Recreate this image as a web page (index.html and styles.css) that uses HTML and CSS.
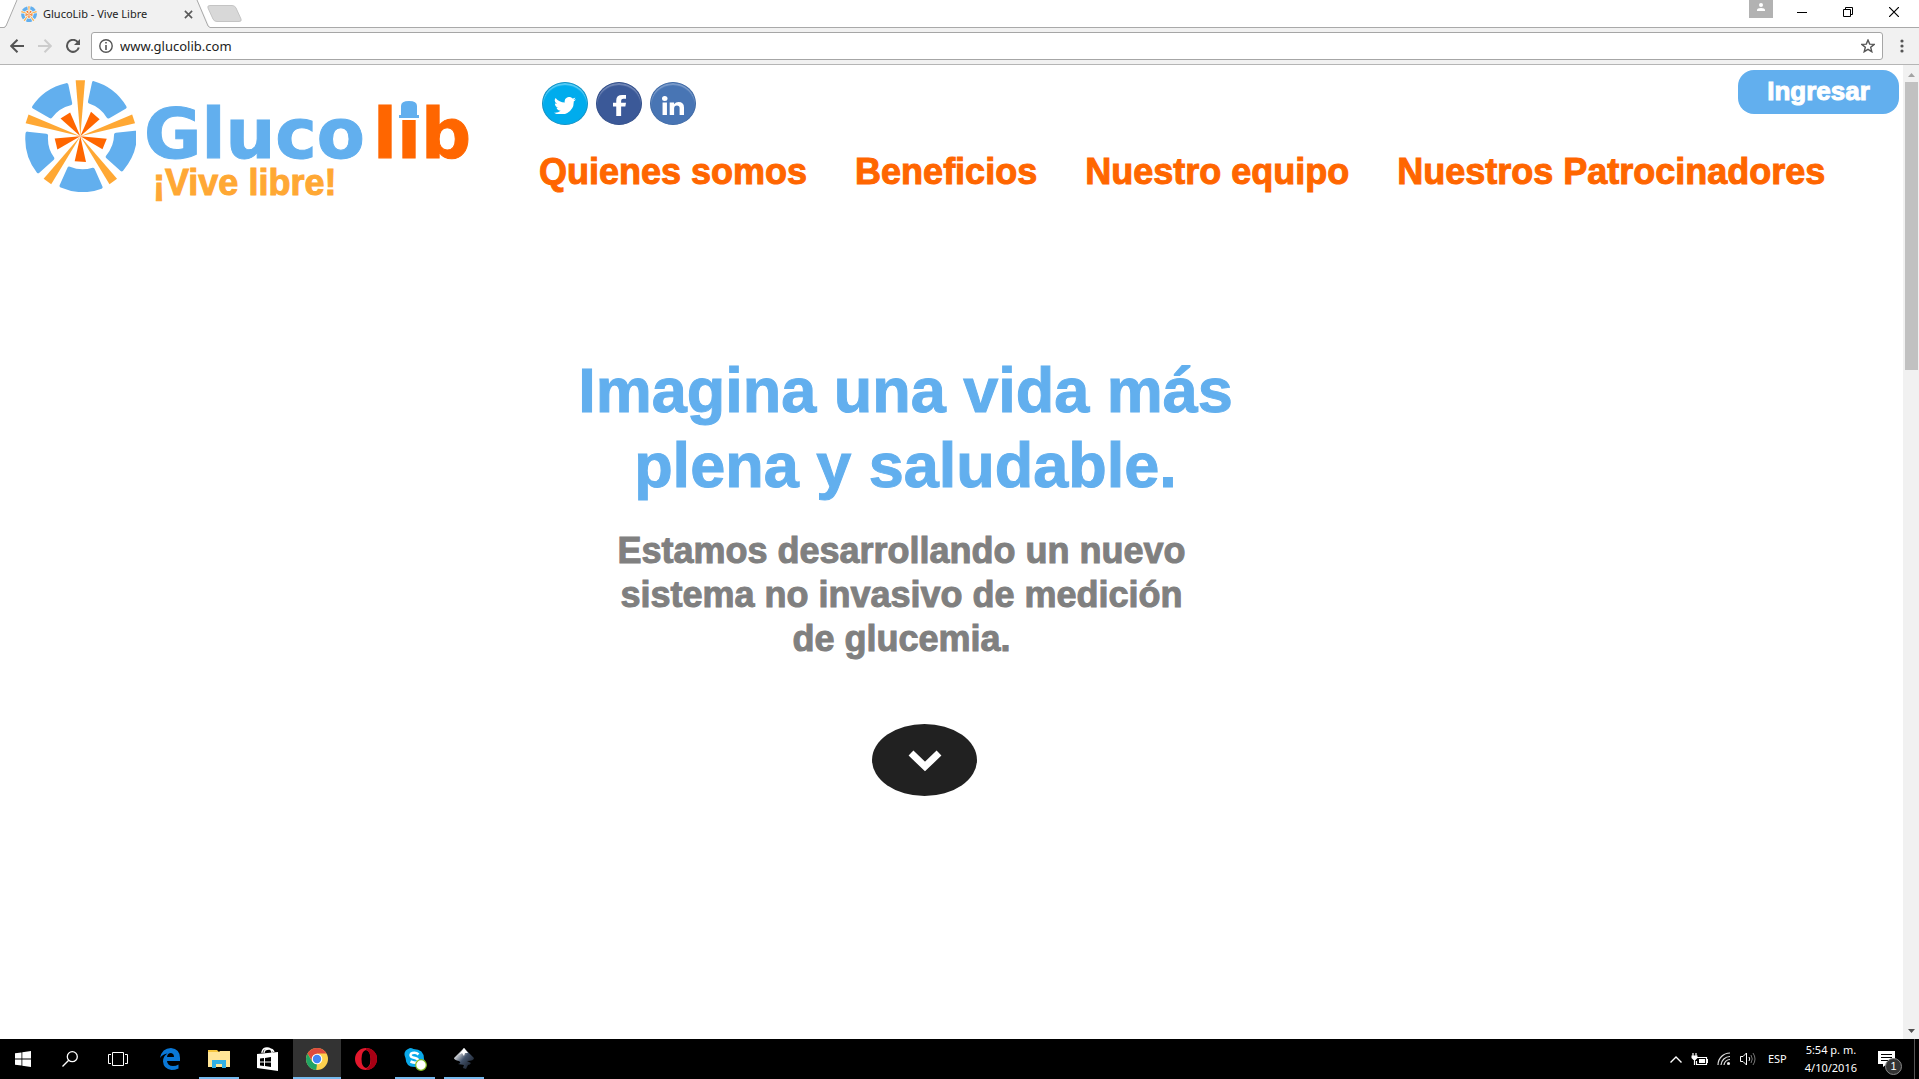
FILE: index.html
```html
<!DOCTYPE html>
<html lang="es">
<head>
<meta charset="utf-8">
<meta name="viewport" content="width=device-width, initial-scale=1">
<title>GlucoLib - Vive Libre</title>
<link rel="stylesheet" href="styles.css">
</head>
<body>
<svg width="0" height="0" class="defs" aria-hidden="true">
  <defs>
    <g id="slice">
      <path fill="#62afee" d="M276 50Q277 45 282 46Q344 63 379 121Q382 126 377 129L328 157Q323 160 320 155Q301 124 267 113Q263 111 264 106Z"/>
      <path fill="#ffa834" d="M227 43H255L241 211Z"/>
      <path fill="#f60" d="M273 138L299 160L241 211Z"/>
    </g>
    <g id="emblem">
      <use href="#slice"/>
      <use href="#slice" transform="rotate(72 241 211)"/>
      <use href="#slice" transform="rotate(144 241 211)"/>
      <use href="#slice" transform="rotate(216 241 211)"/>
      <use href="#slice" transform="rotate(288 241 211)"/>
    </g>
  </defs>
</svg>

<div class="tabstrip">
  <div class="tab">
    <svg class="tab-shape" viewBox="0 0 210 28" aria-hidden="true"><path d="M0 27.500H5L17 1L18 0H197L198 1L210 27.500V28H0Z" fill="#f1f1f1"/><path d="M0 27.500H4L6 26L17 0M197 0L208 26L210 27.500" fill="none" stroke="#a9a9a9"/></svg>
    <svg class="favicon" viewBox="75 40 333 338" aria-hidden="true"><use href="#emblem"/></svg>
    <span class="tab-title">GlucoLib - Vive Libre</span>
    <button class="plain tab-close" aria-label="Cerrar pestaña"><svg width="9" height="9" viewBox="0 0 10 10"><path d="M1 1L9 9M9 1L1 9" stroke="#5a5a5a" stroke-width="1.800"/></svg></button>
  </div>
  <button class="plain new-tab" aria-label="Nueva pestaña"><svg width="36" height="18" viewBox="0 0 36 18"><path d="M3 .5H25Q28 .5 29 3L34 14Q35 16.500 32 16.500H10Q7 16.500 6 14L1 3Q0 .5 3 .5Z" fill="#d8d8d8" stroke="#c4c4c4"/></svg></button>
  <div class="window-buttons">
    <button class="plain profile" aria-label="Perfil"><svg width="24" height="18" viewBox="0 0 24 18"><path fill="#b2b2b2" d="M0 0H24V18H0Z"/><circle cx="12" cy="5" r="2" fill="#fff"/><path d="M8 11V10Q8 8 12 8Q16 8 16 10V11Z" fill="#fff"/></svg></button>
    <button class="plain" aria-label="Minimizar"><svg width="10" height="10" viewBox="0 0 10 10"><path d="M0 5.500H10" stroke="#000"/></svg></button>
    <button class="plain" aria-label="Restaurar"><svg width="10" height="10" viewBox="0 0 10 10"><path d="M.5 2.500H7.500V9.500H.5ZM2.500 2V.5H9.500V7.500H8" fill="none" stroke="#000"/></svg></button>
    <button class="plain" aria-label="Cerrar"><svg width="10" height="10" viewBox="0 0 10 10"><path d="M0 0L10 10M10 0L0 10" stroke="#000" stroke-width="1.200"/></svg></button>
  </div>
</div>

<div class="toolbar">
  <button class="plain" aria-label="Atrás"><svg width="14" height="14" viewBox="0 0 14 14"><path d="M14 7H1M7.500 .7L1.200 7L7.500 13.300" fill="none" stroke="#555" stroke-width="2"/></svg></button>
  <button class="plain" aria-label="Adelante"><svg width="14" height="14" viewBox="0 0 14 14"><path d="M0 7H13M6.500 .7L12.800 7L6.500 13.300" fill="none" stroke="#ccc" stroke-width="2"/></svg></button>
  <button class="plain" aria-label="Recargar"><svg width="14" height="14" viewBox="0 0 14 14"><path d="M11.800 3.200A6 6 0 1 0 12.800 8.500" fill="none" stroke="#555" stroke-width="2"/><path d="M14 0V6H8Z" fill="#555"/></svg></button>
  <div class="omnibox">
    <svg width="14" height="14" viewBox="0 0 14 14" aria-hidden="true"><circle cx="7" cy="7" r="6.200" fill="none" stroke="#555" stroke-width="1.400"/><path d="M7 3V4.600M7 6V11" stroke="#555" stroke-width="1.600"/></svg>
    <input type="text" value="www.glucolib.com" aria-label="Dirección">
    <button class="plain" aria-label="Favorito"><svg width="14" height="14" viewBox="0 0 14 14"><path d="M7 1L8.700 5.100L13.200 5.400L9.700 8.300L10.800 12.700L7 10.300L3.200 12.700L4.300 8.300L.8 5.400L5.300 5.100Z" fill="none" stroke="#555" stroke-width="1.400"/></svg></button>
  </div>
  <button class="plain menu" aria-label="Menú"><svg width="4" height="14" viewBox="0 0 4 14" fill="#555"><circle cx="2" cy="2" r="1.600"/><circle cx="2" cy="7" r="1.600"/><circle cx="2" cy="12" r="1.600"/></svg></button>
</div>

<div class="viewport">
  <div class="page">
    <header class="site-header">
      <a class="logo" href="#">
        <svg class="emblem" viewBox="75 40 333 338" aria-hidden="true"><use href="#emblem"/></svg>
        <span class="brand">
          <span class="wordmark"><span class="gluco">Gluco</span><span class="lib">l<span class="capped">i<svg class="cap" viewBox="0 0 24 19" aria-hidden="true"><path d="M0 0H24V19H0Z" fill="#fff"/><path d="M4 14V5Q4 0 12 0Q20 0 20 5V14H22V17H2V14Z" fill="#62afee"/></svg></span>b</span></span>
          <span class="tagline">¡Vive libre!</span>
        </span>
      </a>
      <div class="header-main">
        <div class="social">
          <a class="twitter" href="#" aria-label="Twitter"><svg width="22" height="17" viewBox="0 0 24 19" preserveAspectRatio="none"><path fill="#fff" d="M24 2.400a9.800 9.800 0 0 1-2.800.8A4.900 4.900 0 0 0 23.300.5a9.900 9.900 0 0 1-3.100 1.200A4.900 4.900 0 0 0 11.800 6.200 14 14 0 0 1 1.700 1a4.900 4.900 0 0 0 1.500 6.600A4.900 4.900 0 0 1 1 7a4.900 4.900 0 0 0 3.900 4.900 5 5 0 0 1-2.200.1 4.900 4.900 0 0 0 4.600 3.400A9.900 9.900 0 0 1 0 17.500 14 14 0 0 0 21.500 5.100 10 10 0 0 0 24 2.400Z"/></svg></a>
          <a class="facebook" href="#" aria-label="Facebook"><svg width="13" height="21" viewBox="0 0 12 22" preserveAspectRatio="none"><path fill="#fff" d="M3 22V12H0V8H3V5.500Q3 0 8.500 0H12V4H9.500Q7.500 4 7.500 6V8H12L11.400 12H7.500V22Z"/></svg></a>
          <a class="linkedin" href="#" aria-label="LinkedIn"><svg width="22" height="19" viewBox="0 0 20 19" preserveAspectRatio="none"><path fill="#fff" d="M.5 6.500H4.500V19H.5ZM7 6.500H11V8.200Q12.500 6 15 6Q20 6 20 11.500V19H16V12Q16 9.500 13.600 9.500Q11 9.500 11 12.500V19H7Z"/><circle cx="2.500" cy="2.500" r="2.500" fill="#fff"/></svg></a>
        </div>
        <nav class="site-nav">
          <a href="#">Quienes somos</a>
          <a href="#">Beneficios</a>
          <a href="#">Nuestro equipo</a>
          <a href="#">Nuestros Patrocinadores</a>
        </nav>
      </div>
      <button class="login">Ingresar</button>
    </header>
    <main class="hero">
      <h1>Imagina una vida más<br>plena y saludable.</h1>
      <p>Estamos desarrollando un nuevo<br>sistema no invasivo de medición<br>de glucemia.</p>
      <button class="scroll-down" aria-label="Bajar"><svg width="34" height="22" viewBox="0 0 34 22"><path d="M3 3L17 16.500L31 3" fill="none" stroke="#fff" stroke-width="7"/></svg></button>
    </main>
  </div>
  <div class="scrollbar" aria-hidden="true">
    <svg width="7" height="4" viewBox="0 0 7 4"><path d="M0 4L3.500 0L7 4Z" fill="#a3a3a3"/></svg>
    <div class="track"><div class="thumb"></div></div>
    <svg width="7" height="4" viewBox="0 0 7 4"><path d="M0 0H7L3.500 4Z" fill="#505050"/></svg>
  </div>
</div>

<footer class="taskbar">
  <div class="task-system">
    <button class="plain" aria-label="Inicio"><svg width="16" height="16" viewBox="0 0 16 16" fill="#fff"><path d="M0 2.300L6.500 1.400V7.500H0ZM7.300 1.300L16 0V7.500H7.300ZM0 8.400H6.500V14.600L0 13.700ZM7.300 8.400H16V16L7.300 14.700Z"/></svg></button>
    <button class="plain" aria-label="Buscar"><svg width="16" height="16" viewBox="0 0 16 16" fill="none" stroke="#fff" stroke-width="1.300"><circle cx="10.300" cy="5.700" r="5"/><path d="M6.700 9.300L.5 15.500"/></svg></button>
    <button class="plain" aria-label="Vista de tareas"><svg width="20" height="14" viewBox="0 0 20 14" fill="none" stroke="#fff"><path d="M4.500 .5H15.500V13.500H4.500ZM3 2.500H.5V11.500H3M17 2.500H19.500V11.500H17"/></svg></button>
  </div>
  <div class="task-apps">
    <button class="plain" aria-label="Edge"><svg width="20" height="22" viewBox="0 0 20 22"><path fill="#0a78d7" fill-rule="evenodd" d="M0 10Q2 0 11 0Q20 1 20 10V13H7Q7.500 18 13 18Q16 18 18.500 16.500V20.500Q15 22 11.500 22Q3.500 21 3 13.500Q3 8 7.500 5.500Q2.500 6 0 10ZM7 9H14Q14 5.500 11 5Q7.500 5 7 9Z"/></svg></button>
    <button class="plain running" aria-label="Explorador"><svg width="22" height="18" viewBox="0 0 22 18"><path fill="#f5c63f" d="M0 0H9L11 2H0Z"/><path fill="#ffe597" d="M0 2H11L12 1H22V17H0Z"/><path fill="#31b0e6" d="M4 18V10H18V18H14V14H8V18Z"/></svg></button>
    <button class="plain" aria-label="Tienda"><svg width="22" height="24" viewBox="0 0 22 24"><path d="M5 6V5Q6 1 10 1Q14 1 15 5V6M7 6Q7 2 12 2Q16 2 17 5" fill="none" stroke="#fff" stroke-width="1.300"/><path fill="#fff" d="M0 7L21 5V24L0 21Z"/><path fill="#000" d="M3 11.500L7 11V14.500H3ZM8 11L14 10V14.500H8ZM3 15.500H7V19L3 18.500ZM8 15.500H14V20L8 19Z"/></svg></button>
    <button class="plain running active" aria-label="Chrome"><svg width="22" height="22" viewBox="0 0 22 22"><circle cx="11" cy="11" r="11" fill="#fdd04d"/><path fill="#dd4b3e" d="M1.500 5.500A11 11 0 0 1 20.500 5.500H11L6 13Z"/><path fill="#21a464" d="M1.500 5.500L6.200 13.700L11 16.500L10.200 22A11 11 0 0 1 1.500 5.500Z"/><circle cx="11" cy="11" r="5.300" fill="#fff"/><circle cx="11" cy="11" r="4.200" fill="#4285f4"/></svg></button>
    <button class="plain" aria-label="Opera"><svg width="22" height="22" viewBox="0 0 22 22"><path fill="#e3182d" fill-rule="evenodd" d="M11 0A11 11 0 0 1 11 22A11 11 0 0 1 11 0ZM11 2Q6.500 3 6.500 11Q6.500 19 11 20Q15.500 19 15.500 11Q15.500 3 11 2Z"/><path fill="#a70014" d="M11 0Q22 1 22 11Q22 21 11 22L12 20Q17 18 15.500 9Q14.500 3 11 2Z"/></svg></button>
    <button class="plain running" aria-label="Skype"><svg width="23" height="23" viewBox="0 0 23 23"><path fill="#0aa9ea" d="M6 0Q8 0 9.500 1Q20 1 20 11Q23 18 16 20Q14 20 12 19Q2 20 1.500 10Q-2 3 6 0Z"/><path d="M14.500 6.500Q12 4 8.500 5Q5.500 6 7 8.500Q8 9.500 11 10Q15 11 13.800 13.500Q12 16 6.500 13.500" fill="none" stroke="#fff" stroke-width="2.500"/><circle cx="17" cy="17" r="5.300" fill="#fff" stroke="#83ba1f" stroke-width="1.200"/></svg></button>
    <button class="plain running" aria-label="Inkscape"><svg width="20" height="22" viewBox="0 0 20 22"><defs><linearGradient id="ink" x1="0" x2="1" y1="0" y2="1"><stop offset=".2" stop-color="#e8e8e8"/><stop offset=".5" stop-color="#42526a"/><stop offset="1" stop-color="#0b0e14"/></linearGradient></defs><path fill="url(#ink)" d="M10 0L20 10Q20 13 13 13L17 15Q16 17 14 17L12 21L9 20L10 17L4 16Q8 15 5 13Q0 12 0 10Z"/><path fill="#fff" d="M10 0L14 5L11 5L10 8L8 5L5 7Z"/></svg></button>
  </div>
  <div class="tray">
    <button class="plain" aria-label="Iconos ocultos"><svg width="12" height="7" viewBox="0 0 12 7"><path d="M.5 6.500L6 1L11.500 6.500" fill="none" stroke="#fff" stroke-width="1.400"/></svg></button>
    <svg width="17" height="13" viewBox="0 0 17 13" aria-hidden="true"><path d="M5 4.500H15.500V11.500H5.500V8M16.500 6V10M2 0V3M5 0V3M3.500 6V12" fill="none" stroke="#fff" stroke-width="1.200"/><path fill="#fff" d="M.5 2.500H6.500V5L4.500 7H2.500L.5 5ZM8 6H14V10H8Z"/></svg>
    <svg width="14" height="14" viewBox="0 0 14 14" fill="none" stroke="#ddd" stroke-width="1.200" aria-hidden="true"><path d="M1 13A12 12 0 0 1 13 1M4 13A9 9 0 0 1 13 4.500M7 13A6 6 0 0 1 13 7.500" /><circle cx="11.500" cy="11.500" r="1" fill="#fff"/></svg>
    <svg width="17" height="14" viewBox="0 0 17 14" fill="none" stroke="#fff" aria-hidden="true"><path d="M.5 4.500H3L6.500 1V13L3 9.500H.5ZM9 5Q10.500 7 9 9"/><path d="M11 3Q13.500 7 11 11M13 1Q17 7 13 13" stroke="#777"/></svg>
    <span class="lang">ESP</span>
    <span class="clock">5:54 p. m.<br>4/10/2016</span>
    <button class="plain notices" aria-label="Notificaciones"><svg width="17" height="16" viewBox="0 0 17 16"><path fill="#fff" d="M0 0H17V13H9L5 16V13H0Z"/><path d="M3 3.500H14M3 6.500H14M3 9.500H10" stroke="#000"/></svg><span class="count">1</span></button>
  </div>
</footer>
</body>
</html>
```
FILE: styles.css
```css
* { box-sizing: border-box; }

body {
  margin: 0;
  min-height: 100vh;
  display: flex;
  flex-direction: column;
  background: #fff;
  font-family: "Noto Sans", sans-serif;
}

svg { display: block; flex: none; }
.defs { position: absolute; }

.plain {
  display: grid;
  place-items: center;
  padding: 0;
  border: 0;
  background: none;
}

/* Browser window */
.tabstrip {
  display: flex;
  height: 28px;
  border-bottom: 1px solid #a9a9a9;
}
.tab {
  position: relative;
  display: flex;
  align-items: center;
  width: 210px;
  height: 28px;
  padding: 0 17px 0 21px;
  gap: 6px;
}
.tab-shape { position: absolute; inset: 0; width: 210px; height: 28px; }
.favicon { position: relative; width: 16px; height: 16px; }
.tab-title { position: relative; flex: 1; font-size: 11px; line-height: 16px; color: #222; white-space: nowrap; }
.tab-close { position: relative; }
.new-tab { height: 28px; margin-left: -3px; }
.window-buttons { display: flex; margin-left: auto; padding-right: 2px; }
.window-buttons button { width: 46px; height: 24px; }
.window-buttons .profile { width: 24px; height: 18px; margin-right: 6px; }

.toolbar {
  display: flex;
  align-items: center;
  gap: 14px;
  height: 37px;
  padding: 0 15px 0 10px;
  background: #f1f1f1;
  border-bottom: 1px solid #b5b5b5;
}
.omnibox {
  flex: 1;
  display: flex;
  align-items: center;
  gap: 7px;
  height: 28px;
  margin: 0 3px 0 -3px;
  padding: 0 7px;
  background: #fff;
  border: 1px solid #a6a6a6;
  border-radius: 3px;
}
.omnibox input {
  flex: 1;
  min-width: 0;
  padding: 0;
  border: 0;
  background: none;
  color: #222;
  font: 13px/20px "Noto Sans", sans-serif;
}

.viewport { flex: 1; display: flex; }
.page {
  flex: 1;
  min-width: 0;
  font-family: "Liberation Sans", Arial, sans-serif;
  font-weight: bold;
  -webkit-text-stroke: 1px currentColor;
}
.scrollbar {
  display: flex;
  flex-direction: column;
  align-items: center;
  gap: 5px;
  width: 16px;
  padding: 8px 0 6px;
  background: #f1f1f1;
}
.track { flex: 1; width: 13px; }
.thumb { height: calc(30% + 5px); background: #c1c1c1; }

/* Site header */
.site-header {
  display: flex;
  align-items: flex-start;
  padding: 5px 4px 0 25px;
}
.site-header a { text-decoration: none; }
.logo { display: flex; gap: 8px; width: 514px; padding-top: 9px; }
.emblem { width: 111px; height: 113px; }
.brand { display: flex; flex-direction: column; padding-top: 27px; }
.wordmark {
  display: flex;
  gap: 8px;
  font: bold 70px/56px "DejaVu Sans", sans-serif;
  color: #62afee;
}
.lib { color: #f60; }
.capped { position: relative; }
.cap { position: absolute; left: 0; top: 8px; width: 24px; height: 19px; }
.tagline { padding-left: 9px; font-size: 36px; line-height: 42px; color: #ffa834; }

.header-main { flex: 1; min-width: 0; padding-top: 12px; }
.social { display: flex; gap: 8px; padding-left: 3px; }
.social a {
  display: grid;
  place-items: center;
  width: 46px;
  height: 43px;
  padding-top: 4px;
  border-radius: 50%;
}
.twitter { background: #00aced; border: 1px solid #1592c4; box-shadow: inset 0 2px 1px #5cccf5; }
.facebook { background: #3b5998; border: 1px solid #34508b; box-shadow: inset 0 2px 1px #7388b7; }
.linkedin { background: #4875b4; border: 1px solid #416ba6; box-shadow: inset 0 2px 1px #7d9dcb; }
.site-nav { display: flex; gap: 48px; padding-top: 26px; }
.site-nav a { font-size: 36px; line-height: 42px; color: #f60; white-space: nowrap; }

.login {
  flex: none;
  width: 161px;
  height: 44px;
  margin-left: -161px;
  padding: 0 0 2px;
  border: 0;
  border-radius: 16px;
  background: #62afee;
  color: #fff;
  font: bold 26px/30px "Liberation Sans", Arial, sans-serif;
  -webkit-text-stroke: 1px currentColor;
}

/* Hero */
.hero {
  display: flex;
  flex-direction: column;
  align-items: center;
  padding: 149px 92px 80px 0;
  text-align: center;
}
.hero h1 { margin: 0; font-size: 63px; line-height: 75px; color: #62afee; }
.hero p { margin: 26px 8px 0 0; font-size: 36px; line-height: 44px; color: #808080; }
.scroll-down {
  display: grid;
  place-items: center;
  width: 105px;
  height: 72px;
  margin: 63px 0 0 38px;
  padding: 2px 0 0;
  border: 0;
  border-radius: 50%;
  background: #212121;
}

/* Taskbar */
.taskbar {
  display: flex;
  height: 40px;
  background: #000;
  color: #fff;
}
.task-system { display: flex; }
.task-system button { width: 48px; height: 40px; }
.task-system button:first-child { width: 46px; }
.task-apps { display: flex; gap: 1px; margin-left: 4px; }
.task-apps button { width: 48px; height: 40px; }
.running { background: linear-gradient(#76b9ed, #76b9ed) center bottom / 40px 2px no-repeat; }
.running.active { background-color: #333; background-size: 48px 2px; }
.tray {
  display: flex;
  align-items: center;
  gap: 9px;
  margin-left: auto;
  margin-right: 4px;
  padding-right: 16px;
  border-right: 1px solid #555;
  font-size: 11px;
  line-height: 18px;
}
.lang { margin-left: 2px; }
.clock { margin-left: 9px; text-align: center; }
.notices { position: relative; margin-left: 12px; width: 20px; place-items: center start; }
.count {
  position: absolute;
  left: 7px;
  top: 7px;
  width: 17px;
  height: 17px;
  border: 1px solid #888;
  border-radius: 50%;
  background: #333;
  color: #fff;
  font-size: 11px;
  line-height: 15px;
  text-align: center;
}
```
